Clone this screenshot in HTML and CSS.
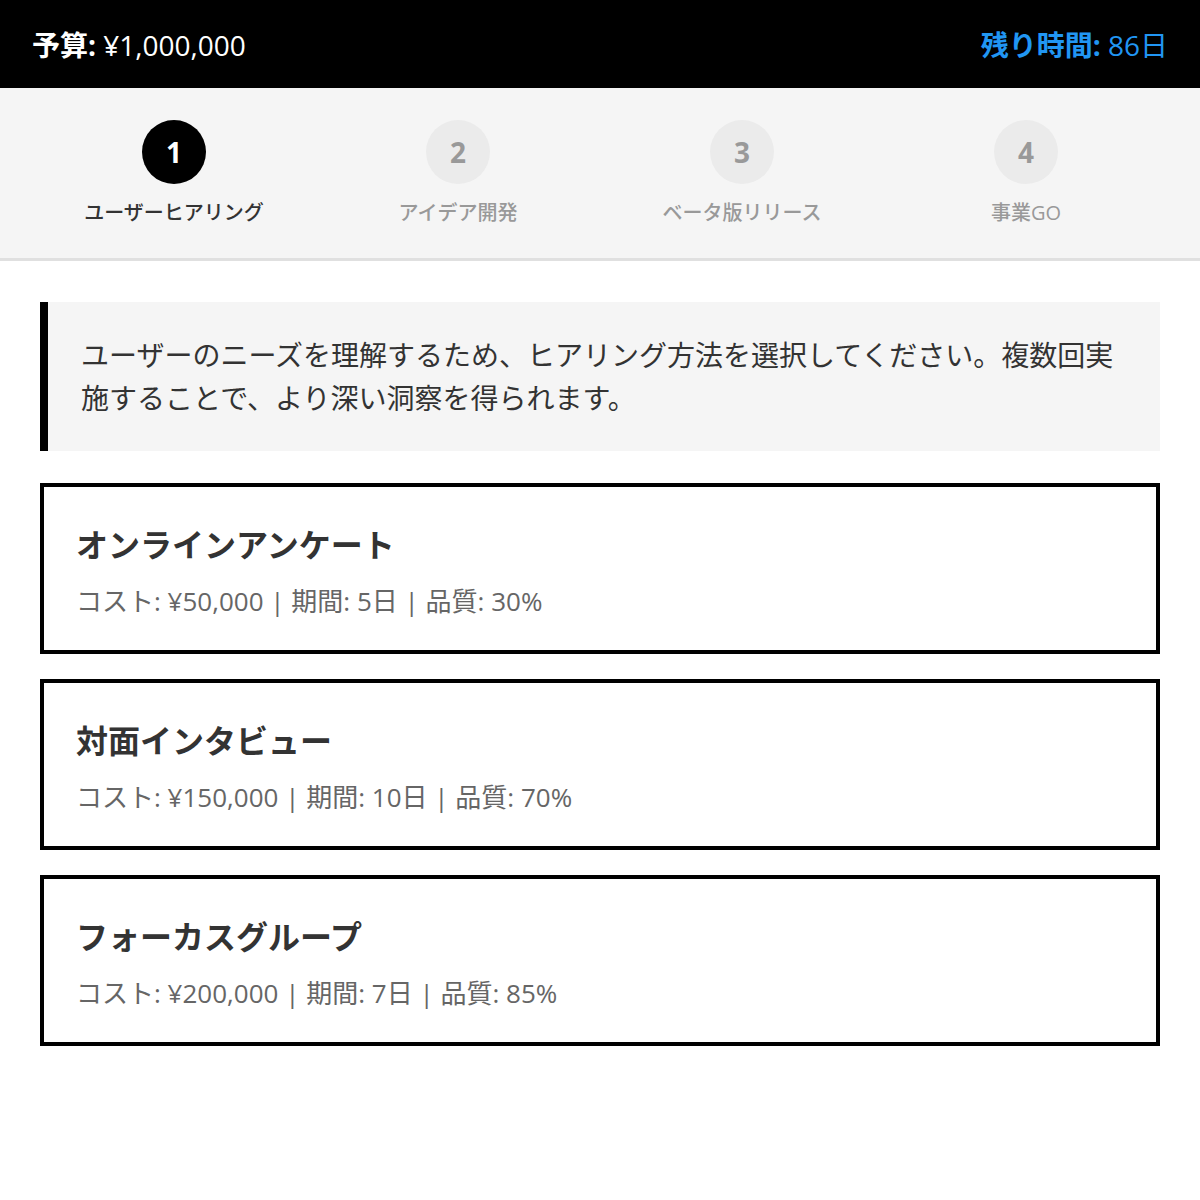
FILE: index.html
```html
<!DOCTYPE html>
<html lang="ja">
<head>
<meta charset="utf-8">
<title>事業シミュレーション</title>
<link rel="stylesheet" href="styles.css">
</head>
<body>
<header class="topbar">
  <div class="budget"><strong>予算:</strong> ¥1,000,000</div>
  <div class="time"><strong>残り時間:</strong> 86日</div>
</header>
<nav class="steps">
  <div class="step active"><div class="circle">1</div><div class="label">ユーザーヒアリング</div></div>
  <div class="step"><div class="circle">2</div><div class="label">アイデア開発</div></div>
  <div class="step"><div class="circle">3</div><div class="label">ベータ版リリース</div></div>
  <div class="step"><div class="circle">4</div><div class="label">事業GO</div></div>
</nav>
<main class="content">
  <div class="intro">ユーザーのニーズを理解するため、ヒアリング方法を選択してください。複数回実施することで、より深い洞察を得られます。</div>
  <div class="card">
    <div class="card-title">オンラインアンケート</div>
    <div class="card-meta">コスト: ¥50,000 <span class="sep">|</span> 期間: 5日 <span class="sep">|</span> 品質: 30%</div>
  </div>
  <div class="card">
    <div class="card-title">対面インタビュー</div>
    <div class="card-meta">コスト: ¥150,000 <span class="sep">|</span> 期間: 10日 <span class="sep">|</span> 品質: 70%</div>
  </div>
  <div class="card">
    <div class="card-title">フォーカスグループ</div>
    <div class="card-meta">コスト: ¥200,000 <span class="sep">|</span> 期間: 7日 <span class="sep">|</span> 品質: 85%</div>
  </div>
</main>
</body>
</html>
```
FILE: styles.css
```css
* { box-sizing: border-box; }
body {
  margin: 0;
  background: #fff;
  font-family: "Open Sans", "Noto Sans CJK JP", sans-serif;
  color: #333;
}
.topbar {
  height: 88px;
  background: #000;
  display: flex;
  align-items: center;
  justify-content: space-between;
  padding: 0 32px;
  font-size: 28px;
}
.topbar strong { font-weight: 700; }
.budget { color: #fff; }
.time { color: #2196f3; }
.steps {
  display: grid;
  grid-template-columns: repeat(4, 1fr);
  padding: 32px 32px 30px;
  background: #f5f5f5;
  border-bottom: 3px solid #e0e0e0;
}
.step {
  display: flex;
  flex-direction: column;
  align-items: center;
}
.circle {
  width: 64px;
  height: 64px;
  border-radius: 50%;
  background: #ebebeb;
  color: #999;
  display: flex;
  align-items: center;
  justify-content: center;
  font-size: 28px;
  font-weight: 700;
}
.label {
  margin-top: 14px;
  font-size: 20px;
  line-height: 30px;
  font-weight: 500;
  color: #999;
}
.step.active .circle { background: #000; color: #fff; }
.step.active .label { color: #333; }
.content {
  padding: 41px 40px;
}
.intro {
  background: #f5f5f5;
  border-left: 8px solid #000;
  padding: 32px 32px 30px 33px;
  font-size: 28px;
  line-height: 1.55;
  color: #333;
  margin-bottom: 32px;
}
.card {
  border: 4px solid #000;
  padding: 34px 32px 31px;
  margin-bottom: 25px;
}
.card-title {
  font-size: 32px;
  line-height: 48px;
  font-weight: 700;
  color: #333;
  margin-bottom: 14px;
}
.card-meta {
  font-size: 26px;
  line-height: 36px;
  color: #666;
}
.sep {
  color: #666;
}
```
